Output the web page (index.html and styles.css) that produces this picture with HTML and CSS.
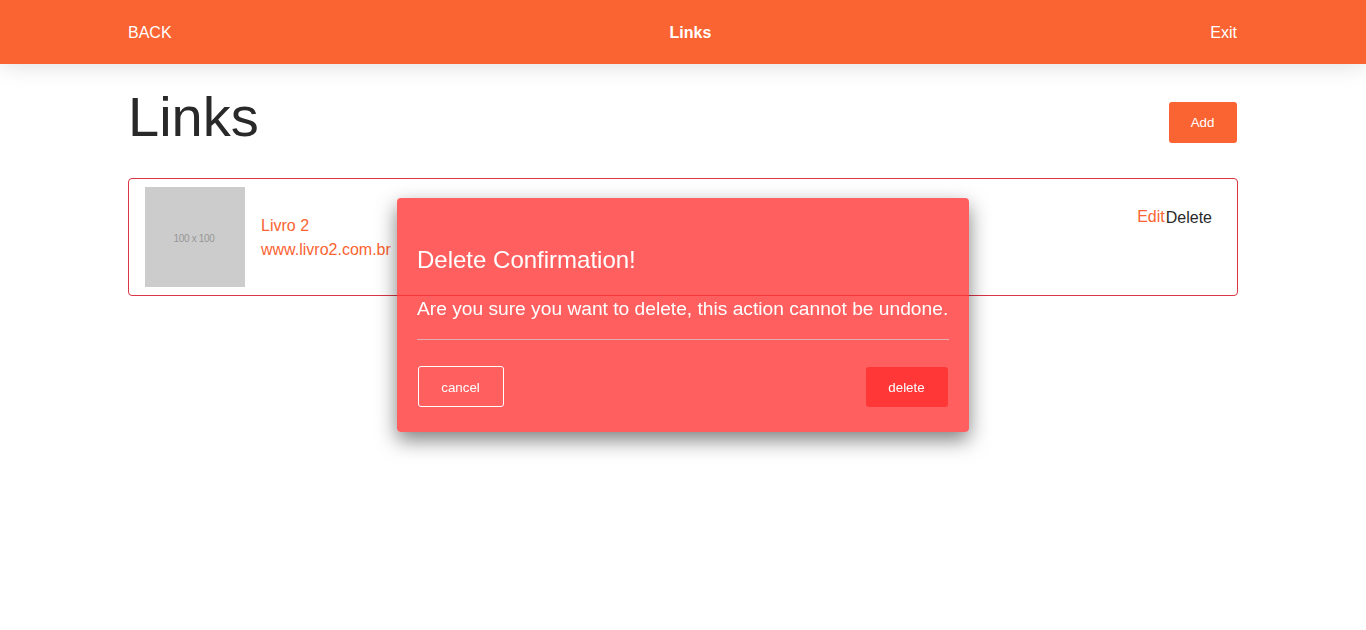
FILE: index.html
```
<!DOCTYPE html>
<html lang="en">
<head>
<meta charset="utf-8">
<title>Links</title>
<link rel="stylesheet" href="styles.css">
</head>
<body>
<header class="header">
  <nav class="nav">
    <a class="nav-link">BACK</a>
    <strong class="nav-title">Links</strong>
    <a class="nav-link">Exit</a>
  </nav>
</header>
<main class="container">
  <div class="heading">
    <h1 class="title">Links</h1>
    <button class="btn btn-primary">Add</button>
  </div>
  <article class="card">
    <div class="thumb">100 x 100</div>
    <div class="info">
      <span>Livro 2</span>
      <span>www.livro2.com.br</span>
    </div>
    <div class="actions">
      <a class="edit">Edit</a>
      <span class="remove">Delete</span>
    </div>
  </article>
</main>
<div class="overlay">
  <section class="modal">
    <h2 class="modal-title">Delete Confirmation!</h2>
    <p class="modal-text">Are you sure you want to delete, this action cannot be undone.</p>
    <div class="modal-actions">
      <button class="btn btn-outline">cancel</button>
      <button class="btn btn-danger">delete</button>
    </div>
  </section>
</div>
</body>
</html>
```
FILE: styles.css
```
* { box-sizing: border-box; }
body {
  margin: 0;
  font: 16px/24px "Liberation Sans", Arial, sans-serif;
  color: #292929;
  background: #fff;
}
.header {
  height: 64px;
  background: #fa6432;
  color: #fff;
  box-shadow: 0 0 24px rgba(0, 0, 0, .15);
}
.nav, .container { width: 1110px; margin: 0 auto; }
.nav {
  height: 64px;
  padding: 2px 1px 0 0;
  display: flex;
  align-items: center;
  justify-content: space-between;
}
.nav-title { padding-right: 1px; }
.heading {
  display: flex;
  justify-content: space-between;
  align-items: flex-start;
  height: 114px;
  padding: 18px 1px 0 0;
}
.title {
  margin: 0;
  font-size: 56px;
  font-weight: 400;
  line-height: 70px;
}
.btn {
  height: 41px;
  padding: 0 1px 0 0;
  border: 0;
  border-radius: 3px;
  font: 13.333px "Liberation Sans", Arial, sans-serif;
  color: #fff;
}
.btn-primary { width: 68px; margin-top: 20px; background: #fa6432; }
.card {
  display: flex;
  height: 118px;
  padding: 8px 25px 8px 16px;
  border: 1px solid #dc3545;
  border-radius: 4px;
}
.thumb {
  width: 100px;
  height: 100px;
  background: #ccc;
  color: #969696;
  font: 10px/104px "Liberation Sans", Arial, sans-serif;
  letter-spacing: -.3px;
  padding-right: 2px;
  text-align: center;
}
.info {
  display: flex;
  flex-direction: column;
  justify-content: center;
  padding-top: 2px;
  margin-left: 16px;
  color: #fa6432;
}
.actions { display: flex; gap: 1px; margin: 18px 0 0 auto; }
.edit { color: #fa6432; }
.remove { padding-top: 1px; }
.overlay {
  position: fixed;
  inset: 0;
  display: flex;
  align-items: center;
  justify-content: center;
}
.modal {
  width: 572px;
  height: 234px;
  padding: 47px 20px 0;
  border-radius: 4px;
  background: rgba(255, 55, 55, .8);
  color: #fff;
  box-shadow: 0 8px 20px rgba(0, 0, 0, .5);
}
.modal-title {
  margin: 0 0 20px;
  font-size: 24px;
  font-weight: 400;
  line-height: 30px;
}
.modal-text {
  margin: 0;
  padding-bottom: 16px;
  border-bottom: 1px solid rgba(215, 215, 215, .65);
  font-size: 19.2px;
  line-height: 28px;
  white-space: nowrap;
}
.modal-actions {
  display: flex;
  justify-content: space-between;
  padding: 26px 1px 0;
}
.btn-outline { width: 86px; padding-top: 2px; border: 1px solid #fff; background: none; }
.btn-danger { width: 82px; height: 40px; margin-top: 1px; background: #ff3737; }
```
